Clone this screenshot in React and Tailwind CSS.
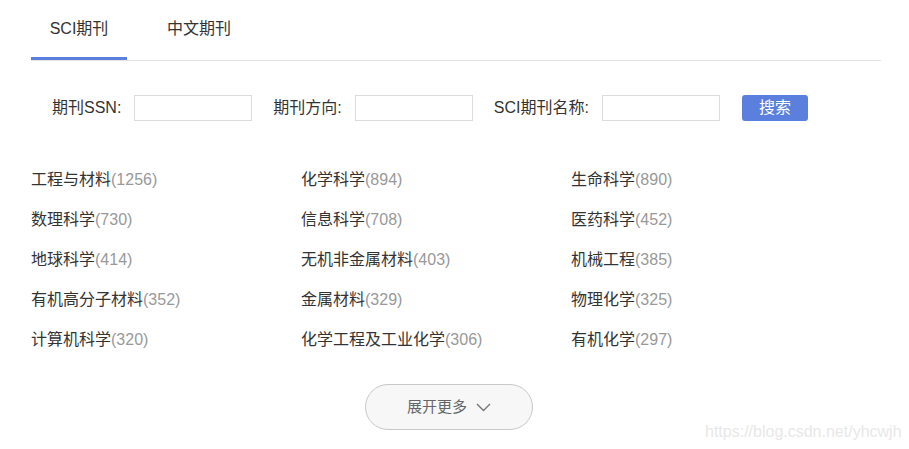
import React from "react";

const items = [
  ["工程与材料", 1256], ["化学科学", 894], ["生命科学", 890],
  ["数理科学", 730], ["信息科学", 708], ["医药科学", 452],
  ["地球科学", 414], ["无机非金属材料", 403], ["机械工程", 385],
  ["有机高分子材料", 352], ["金属材料", 329], ["物理化学", 325],
  ["计算机科学", 320], ["化学工程及工业化学", 306], ["有机化学", 297],
];

function Field({ label, className }) {
  return (
    <div className={"flex items-center " + (className || "")}>
      <span className="text-[16px] text-[#333]">{label}</span>
      <input className="ml-[13px] h-[26px] w-[118px] border border-[#dcdcdc] bg-white outline-none" />
    </div>
  );
}

export default function App() {
  return (
    <div
      className="relative h-[449px] w-[909px] bg-white pl-[31px] pr-[28px]"
      style={{ fontFamily: '"Liberation Sans", "Noto Sans CJK SC", sans-serif' }}
    >
      <div className="flex h-[61px] border-b border-[#e4e4e4]">
        <div className="flex h-[60px] w-[96px] items-center justify-center border-b-[3px] border-[#5b7fdc] text-[16px] text-[#333]">
          SCI期刊
        </div>
        <div className="ml-[40px] flex h-[57px] items-center text-[16px] text-[#333]">
          中文期刊
        </div>
      </div>

      <div className="mt-[34px] flex items-center pl-[21px]">
        <Field label="期刊SSN:" />
        <Field label="期刊方向:" className="ml-[21px]" />
        <Field label="SCI期刊名称:" className="ml-[21px]" />
        <button className="ml-[22px] h-[26px] w-[66px] rounded-[3px] bg-[#5b7fdc] text-[16px] text-white">
          搜索
        </button>
      </div>

      <div className="mt-[39px] grid w-[810px] grid-cols-3">
        {items.map(([name, n]) => (
          <div key={name} className="flex h-[40px] items-center text-[16px]">
            <span className="text-[#333]">{name}</span>
            <span className="text-[#999]">({n})</span>
          </div>
        ))}
      </div>

      <div className="mt-[24px] flex">
        <button className="ml-[334px] flex h-[46px] w-[168px] items-center justify-center rounded-full border border-[#c8c8c8] bg-[#f7f7f7] text-[15px] text-[#666]">
          <span>展开更多</span>
          <svg className="ml-[9px]" width="15" height="9" viewBox="0 0 15 9" fill="none">
            <path d="M1 1 L7.5 7.5 L14 1" stroke="#777" strokeWidth="1.4" />
          </svg>
        </button>
      </div>

      <div className="absolute left-[705px] top-[420px] text-[16px] text-[#e8e8e8]">
        https://blog.csdn.net/yhcwjh
      </div>
    </div>
  );
}
